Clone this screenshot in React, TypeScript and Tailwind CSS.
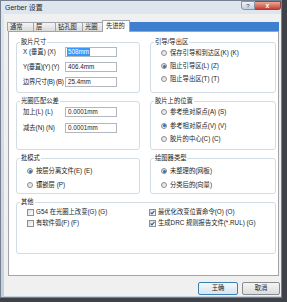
import React from "react";

const FONT = "font-['Liberation_Sans','Noto_Sans_CJK_SC',sans-serif]";

function Radio({ checked }: { checked?: boolean }) {
  return (
    <span className="w-[6px] h-[6px] rounded-full border border-[#8c8c8c] bg-linear-to-br from-[#d8d8d8] to-[#fbfbfb] flex items-center justify-center shrink-0">
      {checked && <span className="w-[3px] h-[3px] rounded-full bg-[#2c6cc0]" />}
    </span>
  );
}

function Check({ checked }: { checked?: boolean }) {
  return (
    <span className="w-[7px] h-[7px] border border-[#8e8f8f] bg-linear-to-br from-[#dedede] to-white flex items-center justify-center shrink-0">
      {checked && (
        <svg width="5" height="5" viewBox="0 0 5 5">
          <path d="M0.6 2.5 L2 3.9 L4.4 0.9" stroke="#2b5c9c" strokeWidth="1.1" fill="none" />
        </svg>
      )}
    </span>
  );
}

function RadioRow({ label, checked, h }: { label: string; checked?: boolean; h: string }) {
  return (
    <div className={"flex items-center " + h}>
      <Radio checked={checked} />
      <span className="ml-[3px] leading-none whitespace-nowrap">{label}</span>
    </div>
  );
}

function CheckRow({ label, checked }: { label: string; checked?: boolean }) {
  return (
    <div className="flex items-center h-[11px]">
      <Check checked={checked} />
      <span className="ml-[2px] leading-none whitespace-nowrap">{label}</span>
    </div>
  );
}

function Group({ title, className, children }: { title: string; className?: string; children?: React.ReactNode }) {
  return (
    <div className={"relative border border-[#d3dce3] rounded-[3px] " + (className ?? "")}>
      <span className="absolute -top-[5px] left-[3px] bg-white px-[1px] leading-[8px] whitespace-nowrap">{title}</span>
      {children}
    </div>
  );
}

function Field({ label, value, selected, tight }: { label: string; value: string; selected?: boolean; tight?: boolean }) {
  return (
    <div className="flex items-center h-[10px]">
      <span className={"w-[42px] leading-none whitespace-nowrap " + (tight ? "tracking-[-0.3px]" : "")}>{label}</span>
      <div className="w-[52px] h-[10px] border border-[#b3b7bf] bg-white flex items-center pl-[1px]">
        {selected ? (
          <span className="bg-[#3399ff] text-white leading-[8px] px-[1px]">{value}</span>
        ) : (
          <span className="leading-none pl-[1px]">{value}</span>
        )}
      </div>
    </div>
  );
}

function Tab({ label, w, active }: { label: string; w: string; active?: boolean }) {
  if (active) {
    return (
      <div className={"relative z-10 h-[12px] bg-white border-t border-l border-r border-[#a0a4ab] flex items-center pl-[3px] " + w}>
        <span className="leading-none">{label}</span>
      </div>
    );
  }
  return (
    <div className={"h-[9px] mb-[1px] bg-linear-to-b from-[#f4f4f4] to-[#dadada] border-t border-l border-[#a0a4ab] flex items-center pl-[2px] " + w}>
      <span className="leading-none">{label}</span>
    </div>
  );
}

export default function App() {
  return (
    <div className={"w-[287px] h-[302px] bg-[#3f4248] overflow-hidden text-[6.3px] text-[#222] " + FONT}>
      <div className="w-[282px] h-[298px] border border-[#76818f] bg-linear-to-b from-[#dfe6ef] to-[#c4d0de] flex flex-col">
        {/* title bar */}
        <div className="h-[13px] flex items-start justify-between shrink-0">
          <span className="pl-[4px] pt-[3px] text-[7px] leading-none text-[#2a2a2a]">Gerber 设置</span>
          <div className="flex">
            <div className="w-[14px] h-[9px] border border-[#8593a8] rounded-bl-[3px] bg-linear-to-b from-[#eef2f7] to-[#c3cfdf] flex items-center justify-center text-[6px] leading-none text-[#3b4a60]">
              ?
            </div>
            <div className="w-[26px] h-[9px] border border-[#8a4a44] border-l-0 rounded-br-[3px] bg-linear-to-b from-[#e9a79c] to-[#c63f2c] flex items-center justify-center text-[7px] leading-none text-white font-bold">
              x
            </div>
          </div>
        </div>
        {/* client */}
        <div className="flex-1 ml-[3px] mb-[1px] bg-[#f0f0f0] flex flex-col pt-[6px]">
          <div className="h-[12px] flex items-end ml-[3px] mr-[2px]">
            <Tab label="通常" w="w-[26px]" />
            <Tab label="层" w="w-[22px]" />
            <Tab label="钻孔图" w="w-[27px]" />
            <Tab label="光圈" w="w-[20px]" />
            <Tab label="先进的" w="w-[28px]" active />
            <div className="flex-1 h-[9px] mb-[1px] bg-[#3f7fd0]" />
          </div>
          <div className="-mt-[1px] ml-[4px] mr-[2px] h-[245px] bg-white border border-[#a0a4ab] pt-[10px] pl-[7px] pr-[2px]">
            <div className="grid grid-cols-[124px_126px] gap-x-[10px] gap-y-[8px] grid-rows-[51px_49px_36px_52px]">
              <Group title="胶片尺寸">
                <div className="flex flex-col gap-[5px] pt-[4px] pl-[6px]">
                  <Field label="X (垂直) (X)" value="508mm" selected />
                  <Field label="Y(垂直)(Y) (Y)" value="406.4mm" tight />
                  <Field label="边界尺寸(B) (B)" value="25.4mm" tight />
                </div>
              </Group>
              <Group title="引导/导出区">
                <div className="flex flex-col pt-[3.5px] pl-[10px]">
                  <RadioRow h="h-[13px]" label="保存引导和到达区(K) (K)" />
                  <RadioRow h="h-[13px]" label="阻止引导区(L) (Z)" checked />
                  <RadioRow h="h-[13px]" label="阻止导出区(T) (T)" />
                </div>
              </Group>
              <Group title="光圈匹配公差">
                <div className="flex flex-col gap-[6px] pt-[5px] pl-[6px]">
                  <Field label="加上(L) (L)" value="0.0001mm" />
                  <Field label="减去(N) (N)" value="0.0001mm" />
                </div>
              </Group>
              <Group title="胶片上的位置">
                <div className="flex flex-col pt-[3.5px] pl-[10px]">
                  <RadioRow h="h-[13.5px]" label="参考绝对原点(A) (S)" />
                  <RadioRow h="h-[13.5px]" label="参考相对原点(V) (V)" checked />
                  <RadioRow h="h-[13.5px]" label="胶片的中心(C) (C)" />
                </div>
              </Group>
              <Group title="批模式">
                <div className="flex flex-col pt-[5px] pl-[10px]">
                  <RadioRow h="h-[14px]" label="按层分离文件(E) (E)" checked />
                  <RadioRow h="h-[14px]" label="镶嵌层 (P)" />
                </div>
              </Group>
              <Group title="绘图器类型">
                <div className="flex flex-col pt-[5px] pl-[10px]">
                  <RadioRow h="h-[14px]" label="未整理的(网板)" checked />
                  <RadioRow h="h-[14px]" label="分类后的(向量)" />
                </div>
              </Group>
              <Group title="其他" className="col-span-2">
                <div className="grid grid-cols-[122px_1fr] pt-[4px] pl-[10px]">
                  <div className="flex flex-col">
                    <CheckRow label="G54 在光圈上改变(G) (G)" />
                    <CheckRow label="有软件弧(F) (F)" />
                  </div>
                  <div className="flex flex-col">
                    <CheckRow label="最优化改变位置命令(O) (O)" checked />
                    <CheckRow label="生成DRC 规则报告文件(*.RUL) (G)" checked />
                  </div>
                </div>
              </Group>
            </div>
          </div>
          <div className="mt-[6px] flex justify-end gap-[4px] pr-[1px]">
            <div className="w-[40px] h-[13px] rounded-[2px] border border-[#3c7fb1] bg-linear-to-b from-[#f4f8fb] to-[#d6e4ef] flex items-center justify-center">
              <span className="leading-none">王确</span>
            </div>
            <div className="w-[38px] h-[13px] rounded-[2px] border border-[#8a8a8a] bg-linear-to-b from-[#f5f5f5] to-[#dcdcdc] flex items-center justify-center">
              <span className="leading-none">取消</span>
            </div>
          </div>
        </div>
      </div>
    </div>
  );
}
